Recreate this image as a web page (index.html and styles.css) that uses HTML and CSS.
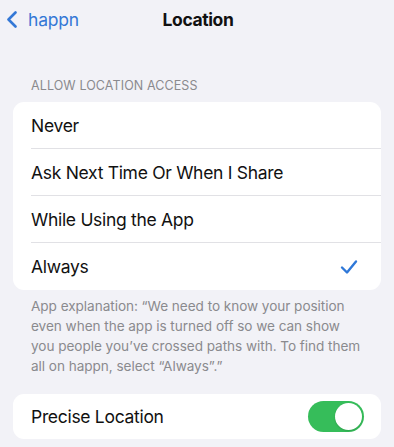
FILE: index.html
```html
<!DOCTYPE html>
<html lang="en">
<head>
<meta charset="utf-8">
<title>Location</title>
<link rel="stylesheet" href="styles.css">
</head>
<body>
<div class="screen">
  <header class="nav">
    <a class="back" href="#">
      <svg class="chevron" width="12" height="17" viewBox="0 0 12 17"><polyline points="9.5,1.5 2.5,8.5 9.5,15.5" fill="none" stroke="currentColor" stroke-width="2.6" stroke-linecap="round" stroke-linejoin="round"/></svg>
      <span>happn</span>
    </a>
    <h1 class="title">Location</h1>
    <span></span>
  </header>

  <div class="section-header">Allow Location Access</div>
  <ul class="card">
    <li class="row"><span class="label">Never</span></li>
    <li class="row"><span class="label">Ask Next Time Or When I Share</span></li>
    <li class="row"><span class="label">While Using the App</span></li>
    <li class="row"><span class="label">Always</span>
      <svg class="check" width="18" height="16" viewBox="0 0 18 16"><polyline points="2,8.5 7,13.5 16,2.5" fill="none" stroke="currentColor" stroke-width="2.4" stroke-linecap="round" stroke-linejoin="round"/></svg>
    </li>
  </ul>
  <p class="footer">App explanation: “We need to know your position<br>even when the app is turned off so we can show<br>you people you’ve crossed paths with. To find them<br>all on happn, select “Always”.”</p>

  <ul class="card">
    <li class="row row-short"><span class="label">Precise Location</span>
      <span class="toggle on"><span class="knob"></span></span>
    </li>
  </ul>
</div>
</body>
</html>
```

FILE: styles.css
```css
* { box-sizing: border-box; }
html, body { margin: 0; padding: 0; }
body {
  background: #f2f2f7;
  font-family: Inter, "Noto Sans", "Liberation Sans", sans-serif;
  color: #111;
  width: 394px;
  height: 447px;
  overflow: hidden;
}
.nav {
  display: grid;
  grid-template-columns: 1fr auto 1fr;
  align-items: center;
  height: 40px;
  padding: 0 0 2px 6px;
}
.back {
  display: flex;
  align-items: center;
  gap: 10px;
  color: #3478d6;
  text-decoration: none;
  font-size: 17.5px;
  letter-spacing: -0.2px;
}
.chevron { display: block; margin-top: 1px; }
.title {
  margin: 0 0 0 -4px;
  font-size: 17.5px;
  font-weight: 700;
  letter-spacing: -0.4px;
  color: #111;
}
.section-header {
  margin: 38px 0 8px;
  padding-left: 31px;
  font-size: 12.5px;
  line-height: 16px;
  text-transform: uppercase;
  color: #8a8a8e;
  letter-spacing: 0.1px;
}
.card {
  list-style: none;
  margin: 0 13px;
  padding: 0;
  background: #fff;
  border-radius: 11px;
  overflow: hidden;
}
.row {
  display: flex;
  align-items: center;
  justify-content: space-between;
  height: 47px;
  margin-left: 18px;
  padding-right: 20px;
  border-bottom: 1px solid #e1e1e5;
  font-size: 17.5px;
  letter-spacing: -0.3px;
}
.row:last-child { border-bottom: none; }
.row-short { height: 45px; }
.check { color: #2f78d8; display: block; margin-right: 3px; }
.footer {
  margin: 6px 0 18px;
  padding: 0 20px 0 31px;
  font-size: 13.6px;
  line-height: 20px;
  color: #8a8a8e;
  letter-spacing: -0.05px;
}
.toggle {
  display: flex;
  align-items: center;
  width: 56px;
  height: 31px;
  border-radius: 16px;
  background: #36bd5a;
  padding: 2px;
  margin-right: -3px;
}
.toggle.on { justify-content: flex-end; }
.knob {
  width: 27px;
  height: 27px;
  border-radius: 50%;
  background: #fff;
  box-shadow: 0 1px 2px rgba(0,0,0,0.15);
}
```
